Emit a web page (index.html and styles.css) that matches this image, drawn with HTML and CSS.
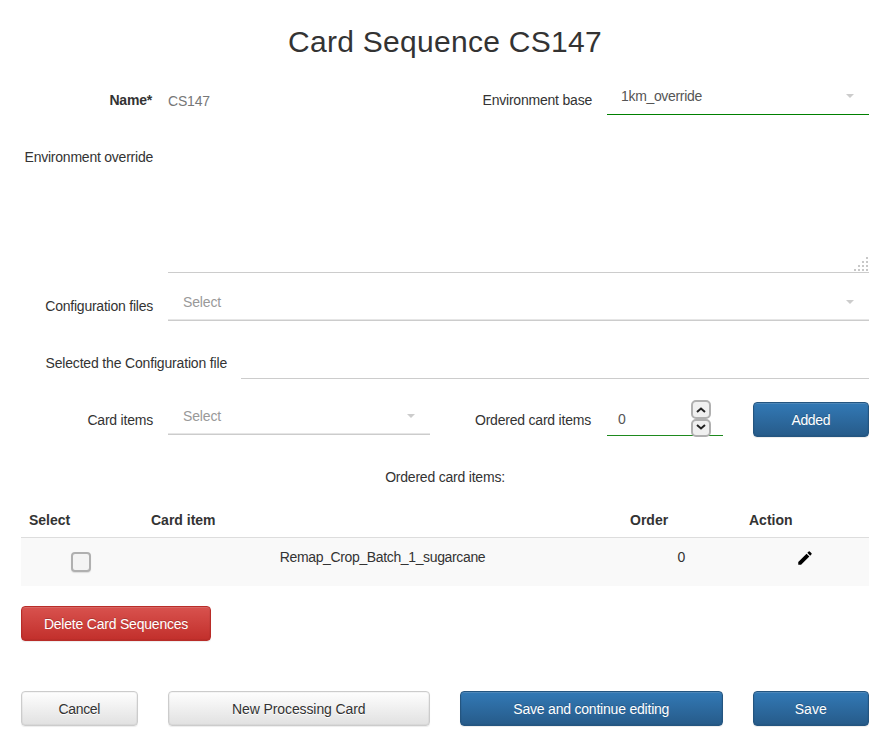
FILE: index.html
```html
<!DOCTYPE html>
<html lang="en">
<head>
<meta charset="utf-8">
<title>Card Sequence CS147</title>
<link rel="stylesheet" href="styles.css">
</head>
<body>
<main>
<h1>Card Sequence CS147</h1>
<div class="row row-base">
  <label class="bold">Name*</label><div class="static">CS147</div>
  <label class="snug">Environment base</label><div class="select chosen"><span>1km_override</span><i class="caret"></i></div>
</div>
<div class="row row-wide tall">
  <label>Environment override</label>
  <div class="textarea"><svg width="15" height="15" viewBox="0 0 15 15" fill="#c8c8c8"><path d="M12 0h2v2h-2zM8 4h2v2H8zM12 4h2v2h-2zM4 8h2v2H4zM8 8h2v2H8zM12 8h2v2h-2zM0 12h2v2H0zM4 12h2v2H4zM8 12h2v2H8zM12 12h2v2h-2z"/></svg></div>
</div>
<div class="row row-wide">
  <label>Configuration files</label><div class="select"><span>Select</span><i class="caret"></i></div>
</div>
<div class="row row-file">
  <label>Selected the Configuration file</label><div class="input"></div>
</div>
<div class="row row-add">
  <label class="snug">Card items</label><div class="select"><span>Select</span><i class="caret"></i></div>
  <label class="snug">Ordered card items</label>
  <div class="number"><span>0</span><div class="spin">
    <b><svg width="10" height="6" viewBox="0 0 10 6"><path d="M1 5l4-3.500L9 5"/></svg></b>
    <b><svg width="10" height="6" viewBox="0 0 10 6"><path d="M1 1l4 3.500L9 1"/></svg></b></div></div>
  <button class="btn primary tight">Added</button>
</div>
<p class="caption">Ordered card items:</p>
<div class="table">
  <div class="tr head"><div>Select</div><div>Card item</div><div>Order</div><div>Action</div></div>
  <div class="tr item"><div><i class="check"></i></div><div class="tight">Remap_Crop_Batch_1_sugarcane</div><div>0</div><div><svg class="pencil" width="18" height="18" viewBox="0 0 24 24"><path d="M3 17.250V21h3.750L17.810 9.940l-3.750-3.750L3 17.250zM20.710 7.040c.39-.39.39-1.020 0-1.410l-2.340-2.340a1 1 0 0 0-1.410 0l-1.830 1.830 3.750 3.750 1.830-1.830z"/></svg></div></div>
</div>
<button class="btn danger snug">Delete Card Sequences</button>
<div class="actions">
  <button class="btn tight">Cancel</button>
  <button class="btn loose">New Processing Card</button>
  <button class="btn primary snug">Save and continue editing</button>
  <button class="btn primary">Save</button>
</div>
</main>
</body>
</html>
```

FILE: styles.css
```css
* { box-sizing: border-box; }
body { margin: 0; background: #fff; color: #333; font: 14px/20px "Liberation Sans", Arial, sans-serif; }
main { width: 848px; margin-left: 21px; height: 742px; }
h1 { margin: 0; height: 82px; padding-top: 25px; font-size: 30px; line-height: 33px; font-weight: 400; text-align: center; letter-spacing: .28px; }
.row { display: grid; height: 57px; align-items: start; }
.row-base { grid-template-columns: 132px 15px 262px 162px 14.500px 262.500px; }
.row-base .static { grid-column: 3; }
.row-base .chosen { grid-column: 6; }
.row-wide { grid-template-columns: 132px 701px; column-gap: 15px; }
.row-file { grid-template-columns: 205px 628px; column-gap: 15px; }
.row-add { grid-template-columns: 132px 15px 262px 161px 15.500px 116.500px 29.500px 116.500px; }
.row-add .select { grid-column: 3; }
.row-add .number { grid-column: 6; }
.row-add .btn { grid-column: 8; }
.tall { height: 149px; }
label { padding-top: 8px; text-align: right; white-space: nowrap; }
.row-wide label { letter-spacing: -.23px; }
.row-file label { letter-spacing: -.17px; margin-right: -1px; }
.bold { font-weight: 700; padding-right: 1px; letter-spacing: -.2px; }
.snug { letter-spacing: -.21px; }
.loose { letter-spacing: -.1px; }
.tight { letter-spacing: -.36px; }
.static { padding-top: 9px; color: #777; letter-spacing: -.2px; }
.select { height: 33px; border-bottom: 1px solid #ccc; box-shadow: inset 0 -1px #e6e6e6; display: flex; align-items: flex-start; justify-content: space-between; padding: 4px 15px 0; color: #999; letter-spacing: -.15px; }
.chosen { border-color: #008000; color: #555; box-shadow: none; letter-spacing: -.33px; padding-left: 14.500px; }
.caret { width: 8px; height: 4px; margin: 8px 0 0; background: #ccc; clip-path: polygon(0 0, 100% 0, 50% 100%); }
.textarea { height: 134px; border-bottom: 1px solid #ccc; display: flex; justify-content: flex-end; align-items: flex-end; }
.input { height: 34px; border-bottom: 1px solid #ccc; }
.number { height: 34px; border-bottom: 1px solid #1e8a1e; padding: 7px 12px 0 11.500px; display: flex; justify-content: space-between; color: #555; }
.spin { width: 20px; margin-top: -9px; height: 37px; }
.spin b { display: flex; width: 20px; height: 19px; border: 2px solid #b0b0b0; border-radius: 5px; background: #f0f0f0; align-items: center; justify-content: center; }
.spin b + b { height: 18px; padding-bottom: 2px; }
.spin path { fill: none; stroke: #222; stroke-width: 2; }
.btn { height: 35px; min-width: 0; padding: 0; border: 1px solid #ccc; border-radius: 4px; background: linear-gradient(#fff, #e0e0e0) border-box; color: #333; font: inherit; text-align: center; text-shadow: 0 1px 0 #fff; box-shadow: inset 0 1px 0 rgba(255,255,255,.15), 0 1px 1px rgba(0,0,0,.075), inset 0 0 0 1px rgba(0,0,0,.04); }
.primary { border-color: #245580; background-image: linear-gradient(#337ab7, #265a88); color: #fff; text-shadow: 0 -1px 0 rgba(0,0,0,.2); }
.danger { display: block; width: 190px; margin-top: 20px; border-color: #b92c28; background-image: linear-gradient(#d9534f, #c12e2a); color: #fff; text-shadow: 0 -1px 0 rgba(0,0,0,.2); }
.caption { margin: 0; height: 43px; padding-top: 8px; text-align: center; letter-spacing: -.21px; }
.tr { display: grid; grid-template-columns: 122px 479px 119px 128px; }
.tr > div { padding: 8px; }
.head { height: 36px; font-weight: 700; border-bottom: 1px solid #ddd; }
.item { height: 48px; background: #f9f9f9; text-align: center; }
.item > div { padding-top: 9px; }
.check { display: block; width: 20px; height: 20px; margin: 5px 0 0 42px; border: 2px solid #b0b0b0; border-radius: 4px; background: #f4f4f4; box-shadow: 0 1px 1px #ddd; }
.pencil { display: block; margin: 2px auto 0; fill: #000; }
.actions { display: grid; grid-template-columns: 116.500px 262.500px 262.500px 116.500px; column-gap: 30px; margin-top: 50px; }
```
